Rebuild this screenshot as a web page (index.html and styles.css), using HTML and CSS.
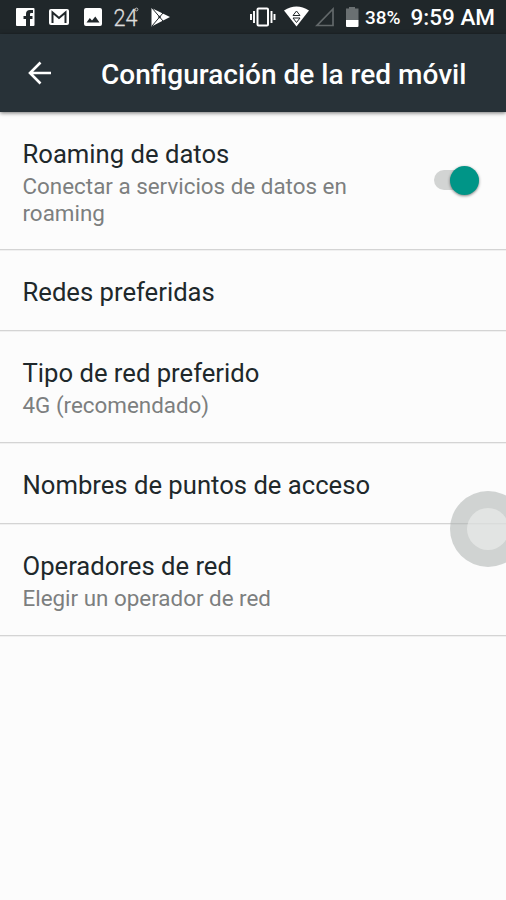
FILE: index.html
```html
<!DOCTYPE html>
<html lang="es">
<head>
<meta charset="utf-8">
<title>Configuración de la red móvil</title>
<link rel="stylesheet" href="styles.css">
</head>
<body>
<div class="status">
  <svg class="status-icons" width="180" height="34" viewBox="0 0 180 34">
    <path fill="#fff" fill-rule="evenodd" d="M17 8h16.500q1 0 1 1v16q0 1-1 1H30v-7h2.500v-3H30v-2q0-1 1-1h2v-3h-3q-4 0-4 4v2h-2.500v3H26v7h-9q-1 0-1-1V9q0-1 1-1z"/>
    <rect x="49" y="9" width="20" height="16" rx="2" fill="#fff"/>
    <path d="M52.500 23V12.500l6.500 5.500 6.500-5.500V23" fill="none" stroke="#20272a" stroke-width="2"/>
    <path fill="#fff" fill-rule="evenodd" d="M86 8h14q2 0 2 2v14q0 2-2 2H86q-2 0-2-2V10q0-2 2-2zM86.500 22.500h13l-4.200-6-3.300 4-2.200-2.500z"/>
    <text class="temp" x="113.500" y="26" textLength="24" lengthAdjust="spacingAndGlyphs">24</text>
    <circle cx="136.500" cy="9.500" r="1.400" fill="none" stroke="#ddd" stroke-width=".8"/>
    <path fill="#fff" d="M151.500 8l18.500 9-18.500 9.500z"/>
    <path d="M152 8l11 13M152 26l11-13" fill="none" stroke="#20272a" stroke-width="1"/>
    <circle cx="159.500" cy="17" r="1.200" fill="#20272a"/>
  </svg>
  <div class="status-right">
    <svg width="112" height="34" viewBox="248 0 112 34">
      <rect x="257.500" y="8.500" width="10.500" height="17" rx="1" fill="none" stroke="#fff" stroke-width="2"/>
      <path d="M254 11v12M251 14v6M271.500 11v12M274.500 14v6" stroke="#fff" stroke-width="1.900"/>
      <path d="M284 10.500q12.500-8 25 0L296.500 26.500z" fill="#fff"/>
      <path d="M293 15.500l3.500-4.500 3.500 4.500zM293 18h7l-3.500 4.500z" fill="#fff" stroke="#20272a" stroke-width="1"/>
      <path d="M317 25.500h16V9z" fill="none" stroke="#62686a" stroke-width="1.700"/>
      <path d="M346 8.500h3V7h6v1.500h3.500V20H346z" fill="#6a7072"/>
      <path d="M346 20h12.500v6q0 1-1 1H347q-1 0-1-1z" fill="#fff"/>
    </svg>
    <span class="percent">38%</span>
    <span class="clock">9:59 AM</span>
  </div>
</div>
<header class="bar">
  <svg class="back" width="24" height="24" viewBox="0 0 24 24"><path d="M23 12H2M12.500 1.500L2 12l10.500 10.500" fill="none" stroke="#fff" stroke-width="2.600"/></svg>
  <h1>Configuración de la red móvil</h1>
</header>
<main>
  <section class="row roaming">
    <div class="copy"><h2>Roaming de datos</h2><p>Conectar a servicios de datos en<br>roaming</p></div>
    <div class="switch"><i></i></div>
  </section>
  <section class="row single"><h2>Redes preferidas</h2></section>
  <section class="row double"><div><h2>Tipo de red preferido</h2><p>4G (recomendado)</p></div></section>
  <section class="row single"><h2>Nombres de puntos de acceso</h2></section>
  <section class="row double"><div><h2>Operadores de red</h2><p>Elegir un operador de red</p></div></section>
</main>
<div class="assist"></div>
</body>
</html>
```
FILE: styles.css
```css
* { box-sizing: border-box; }
body { margin: 0; height: 900px; position: relative; overflow: hidden; background: #fcfcfc; font-family: Roboto, sans-serif; color: #20282b; }
h1, h2, p { margin: 0; white-space: nowrap; }
svg { display: block; flex: none; }
.status { height: 34px; background: #20272a; display: flex; justify-content: space-between; color: #fff; }
.temp { font: 300 24px Roboto, sans-serif; fill: #ddd; stroke: #ddd; stroke-width: .3px; }
.status-right { display: flex; width: 258px; align-items: center; line-height: 34px; }
.percent { width: 50.500px; padding: 1px 0 0 5px; font-size: 19px; font-weight: 500; }
.clock { font-size: 22.500px; font-weight: 500; white-space: nowrap; }
.bar { height: 78px; background: #283238; color: #fff; display: flex; align-items: center; padding-left: 28px; box-shadow: 0 1px 4px rgba(0, 0, 0, .55); }
.back { margin-right: 49px; }
h1 { font-size: 28.050px; font-weight: 500; line-height: 34px; padding-top: 3px; }
.row { display: flex; padding: 26px 27px 0 22.500px; border-bottom: 1px solid #d4d4d4; box-shadow: 0 1px 0 #f0f0f0; }
.roaming { height: 138px; justify-content: space-between; }
.single { height: 81px; }
.double { height: 112px; }
h2 { font-size: 25.650px; font-weight: 400; line-height: 32px; }
p { color: #7c7f7f; font-size: 22.400px; line-height: 27px; padding-top: 3px; }
.roaming p { line-height: 26.500px; }
.switch { width: 45px; height: 20px; margin-top: 32px; border-radius: 10px; background: #d2d4d3; display: flex; justify-content: flex-end; align-items: center; }
.switch i { width: 29px; height: 29px; border-radius: 50%; background: #009587; box-shadow: 0 1px 3px rgba(0, 0, 0, .5); flex: none; }
.assist { position: absolute; left: 450px; top: 491px; width: 76px; height: 76px; border-radius: 50%; background: rgba(172, 176, 174, .55); }
.assist::after { content: ""; position: absolute; inset: 17px; border-radius: 50%; background: rgba(240, 242, 241, .55); }
```
